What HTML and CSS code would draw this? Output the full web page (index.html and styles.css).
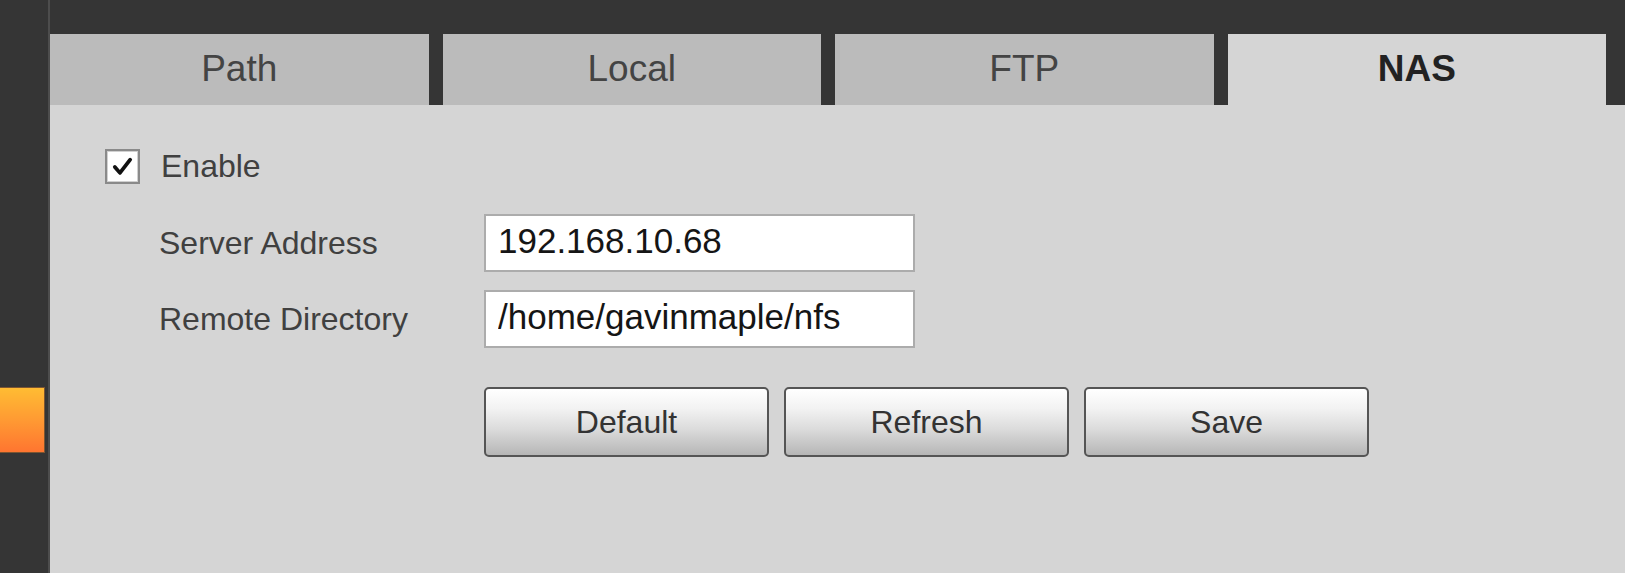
FILE: index.html
```html
<!DOCTYPE html>
<html>
<head>
<meta charset="utf-8">
<link rel="stylesheet" href="styles.css">
</head>
<body>
<div class="page">
  <aside class="sidebar">
    <div class="menu-item active"></div>
  </aside>
  <main class="main">
    <nav class="tabs">
      <div class="tab">Path</div>
      <div class="tab">Local</div>
      <div class="tab">FTP</div>
      <div class="tab selected">NAS</div>
    </nav>
    <section class="panel">
      <label class="enable-row">
        <span class="checkbox">
          <svg viewBox="0 0 34 34" width="34" height="34"><path d="M8 17.5 L14 24.5 L26 9" fill="none" stroke="#111" stroke-width="4.4" stroke-linecap="round" stroke-linejoin="round"/></svg>
        </span>
        <span class="enable-text">Enable</span>
      </label>
      <div class="fields">
        <div class="field-label">Server Address</div>
        <input class="field-input" type="text" value="192.168.10.68">
        <div class="field-label">Remote Directory</div>
        <input class="field-input" type="text" value="/home/gavinmaple/nfs">
      </div>
      <div class="buttons">
        <button class="btn">Default</button>
        <button class="btn">Refresh</button>
        <button class="btn">Save</button>
      </div>
    </section>
  </main>
</div>
</body>
</html>
```
FILE: styles.css
```css
html, body {
  margin: 0;
  padding: 0;
  height: 100%;
  background: #353535;
  font-family: "Liberation Sans", Arial, sans-serif;
}

.page {
  display: flex;
  height: 573px;
  overflow: hidden;
}

.sidebar {
  width: 48px;
  flex: none;
  border-right: 2px solid #4d4d4d;
  padding-top: 387px;
  box-sizing: content-box;
}

.menu-item.active {
  width: 44px;
  height: 64px;
  background: linear-gradient(to bottom, #ffbc33 0%, #ff9a33 50%, #ff7530 100%);
  border: 1px solid #7d5531;
  border-left: none;
}

.main {
  flex: 1;
  display: flex;
  flex-direction: column;
  padding-top: 34px;
}

.tabs {
  display: flex;
  gap: 14px;
  height: 71px;
  padding-right: 19px;
}

.tab {
  flex: 1;
  background: #bbbbbb;
  color: #444444;
  font-size: 37px;
  line-height: 69px;
  text-align: center;
}

.tab.selected {
  background: #d5d5d5;
  color: #222222;
  font-weight: bold;
}

.panel {
  flex: 1;
  background: #d5d5d5;
  padding: 44px 0 0 55px;
}

.enable-row {
  display: flex;
  align-items: center;
  gap: 21px;
  height: 34px;
}

.checkbox {
  width: 35px;
  height: 35px;
  box-sizing: border-box;
  border: 2px solid #8a8a8a;
  background: #ffffff;
  box-shadow: inset 0 0 0 1px #d0d0d0;
  display: flex;
  align-items: center;
  justify-content: center;
}

.checkbox svg {
  width: 29px;
  height: 29px;
}

.enable-text {
  font-size: 32px;
  line-height: 34px;
  color: #404040;
}

.fields {
  display: grid;
  grid-template-columns: 325px 431px;
  row-gap: 18px;
  margin: 31px 0 0 54px;
  align-items: center;
}

.field-label {
  font-size: 32px;
  line-height: 58px;
  color: #404040;
}

.field-input {
  box-sizing: border-box;
  width: 431px;
  height: 58px;
  margin: 0;
  border: 2px solid #acacac;
  background: #ffffff;
  padding: 0 12px 4px 12px;
  font-family: "Liberation Sans", Arial, sans-serif;
  font-size: 35px;
  color: #151515;
  outline: none;
}

.buttons {
  display: flex;
  gap: 15px;
  margin: 39px 0 0 379px;
}

.btn {
  box-sizing: border-box;
  width: 285px;
  height: 70px;
  margin: 0;
  border: 2px solid #555555;
  border-radius: 5px;
  background: linear-gradient(to bottom, #ffffff 0%, #f2f2f2 30%, #dcdcdc 60%, #b6b6b6 100%);
  font-family: "Liberation Sans", Arial, sans-serif;
  font-size: 32px;
  color: #333333;
  padding: 0;
}
```
